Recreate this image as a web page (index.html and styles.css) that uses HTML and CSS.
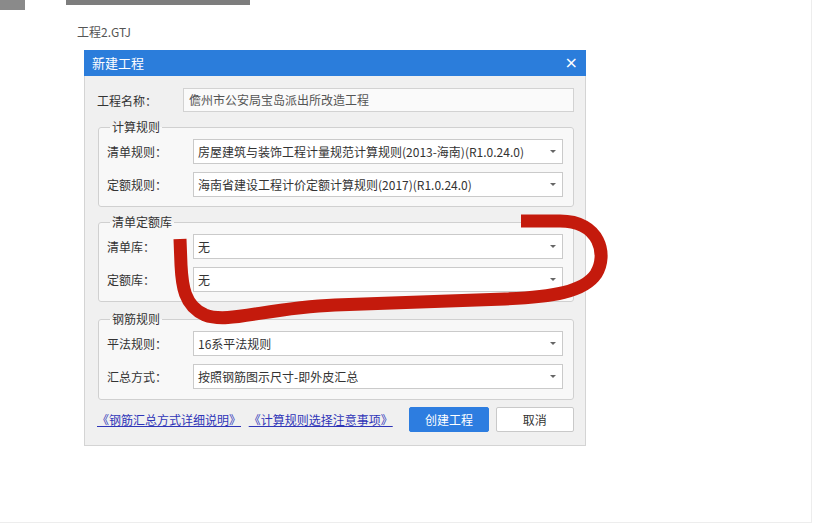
FILE: index.html
```html
<!DOCTYPE html>
<html lang="zh">
<head>
<meta charset="utf-8">
<link rel="stylesheet" href="styles.css">
</head>
<body>
<div class="page">
  <div class="topbar">
    <div class="blk"></div>
    <div class="bar"></div>
  </div>
  <div class="fname">工程2.GTJ</div>
  <div class="dialog">
    <div class="titlebar">
      <span class="title">新建工程</span>
      <span class="close">×</span>
    </div>
    <div class="body">
      <div class="namerow">
        <span class="nlabel">工程名称：</span>
        <div class="ninput">儋州市公安局宝岛派出所改造工程</div>
      </div>
      <fieldset class="group">
        <legend>计算规则</legend>
        <div class="row"><span class="label">清单规则：</span><div class="select"><span>房屋建筑与装饰工程计量规范计算规则(2013-海南)(R1.0.24.0)</span><i class="arrow"></i></div></div>
        <div class="row"><span class="label">定额规则：</span><div class="select"><span>海南省建设工程计价定额计算规则(2017)(R1.0.24.0)</span><i class="arrow"></i></div></div>
      </fieldset>
      <fieldset class="group">
        <legend>清单定额库</legend>
        <div class="row"><span class="label">清单库：</span><div class="select"><span>无</span><i class="arrow"></i></div></div>
        <div class="row"><span class="label">定额库：</span><div class="select"><span>无</span><i class="arrow"></i></div></div>
      </fieldset>
      <fieldset class="group last">
        <legend>钢筋规则</legend>
        <div class="row"><span class="label">平法规则：</span><div class="select"><span>16系平法规则</span><i class="arrow"></i></div></div>
        <div class="row"><span class="label">汇总方式：</span><div class="select"><span>按照钢筋图示尺寸-即外皮汇总</span><i class="arrow"></i></div></div>
      </fieldset>
      <div class="footer">
        <a class="link" href="#">《钢筋汇总方式详细说明》</a>
        <a class="link" href="#">《计算规则选择注意事项》</a>
        <span class="spacer"></span>
        <button class="btn primary">创建工程</button>
        <button class="btn">取消</button>
      </div>
    </div>
  </div>
  <svg class="scribble" width="816" height="525" viewBox="0 0 816 525">
    <path d="M521 221 L560 221 C600 221 608 255 596 274 C584 292 552 297 505 299 L335 305 C265 308 228 324 205 315 C184 306 182 285 181 265 L180 239" fill="none" stroke="#c41a0c" stroke-width="13"/>
  </svg>
</div>
</body>
</html>
```

FILE: styles.css
```css
* { box-sizing: border-box; }
html, body { margin: 0; padding: 0; background: #fff; }
body {
  font-family: "Noto Sans CJK SC", "Noto Sans", sans-serif;
  font-size: 12px;
  color: #333;
}
.page {
  position: relative;
  width: 812px;
  height: 523px;
  border-right: 1px solid #ededed;
  border-bottom: 1px solid #ededed;
  display: flex;
  flex-direction: column;
}
.topbar { display: flex; align-items: flex-start; height: 24px; }
.blk { width: 25px; height: 10px; background: #8a8a8a; }
.bar { width: 184px; height: 5px; background: #7d7d7d; margin-left: 41px; }
.fname {
  margin-left: 77px;
  font-size: 12px;
  line-height: 16px;
  color: #555;
}
.dialog {
  margin-left: 84px;
  margin-top: 10px;
  width: 502px;
  background: #f0f0f0;
  border: 1px solid #d4d4d4;
  border-top: none;
}
.titlebar {
  height: 26px;
  background: #2b7ddb;
  color: #fff;
  display: flex;
  align-items: center;
  justify-content: space-between;
  padding: 0 8px 0 8px;
  margin: 0 -1px;
}
.title { font-size: 13px; line-height: 16px; }
.close { font-size: 16px; line-height: 16px; font-family: "DejaVu Sans", sans-serif; }
.body { padding: 12px 11px 13px 12px; }
.namerow { display: flex; align-items: center; height: 24px; }
.nlabel { width: 86px; font-size: 12px; color: #333; }
.ninput {
  flex: 1;
  height: 24px;
  border: 1px solid #d2d2d2;
  background: #fafafa;
  padding: 0 5px;
  line-height: 22px;
  color: #555;
}
.group {
  margin: 7px 0 0 1px;
  padding: 4px 10px 9px 8px;
  border: 1px solid #d0d0d0;
  border-radius: 3px;
  background: #f8f8f8;
  min-width: 0;
}
.group.last { margin-top: 9px; padding-bottom: 10px; }
.group legend {
  padding: 0 2px;
  margin-left: 3px;
  line-height: 16px;
  font-size: 12px;
  color: #333;
}
.row { display: flex; align-items: center; height: 25px; }
.row + .row { margin-top: 8px; }
.label { width: 86px; flex: none; }
.select {
  flex: 1;
  height: 25px;
  border: 1px solid #cacaca;
  background: #fff;
  padding: 0 4px;
  display: flex;
  align-items: center;
  justify-content: space-between;
  color: #333;
  line-height: 16px;
}
.arrow {
  width: 0;
  height: 0;
  border-left: 3px solid transparent;
  border-right: 3px solid transparent;
  border-top: 3px solid #666;
  margin-right: 2px;
}
.footer {
  display: flex;
  align-items: center;
  margin-top: 7px;
  height: 25px;
  gap: 9px;
}
.link {
  color: #2f35b8;
  text-decoration: underline;
  font-size: 12px;
  line-height: 16px;
}
.spacer { flex: 1; }
.btn {
  font-family: inherit;
  font-size: 12px;
  width: 79px;
  height: 25px;
  border: 1px solid #c9c9c9;
  background: #fff;
  color: #333;
  border-radius: 2px;
  padding: 0;
}
.btn.primary {
  background: #2d7de0;
  border-color: #2d7de0;
  color: #fff;
  width: 80px;
  margin-right: -2px;
}
.scribble { position: absolute; left: 0; top: 0; pointer-events: none; }
```
